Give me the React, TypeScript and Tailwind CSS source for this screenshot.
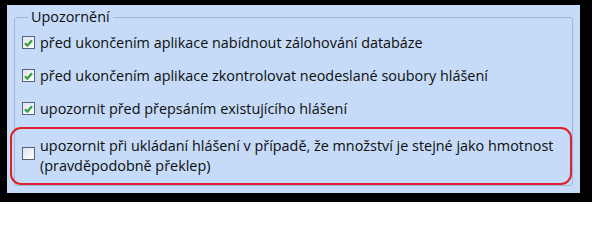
import React from "react";

type Row = { text: string; checked: boolean };

const rows: Row[] = [
  { text: "před ukončením aplikace nabídnout zálohování databáze", checked: true },
  { text: "před ukončením aplikace zkontrolovat neodeslané soubory hlášení", checked: true },
  { text: "upozornit před přepsáním existujícího hlášení", checked: true },
];

function Check({ checked }: { checked: boolean }) {
  return (
    <span className="flex h-[13px] w-[13px] shrink-0 items-center justify-center border border-[#55637f] bg-gradient-to-br from-[#dfe3ea] to-white">
      {checked && (
        <svg width="9" height="8" viewBox="0 0 9 8">
          <path d="M1 4.2 L3.4 6.6 L8 1.2" fill="none" stroke="#2fa33a" strokeWidth="2.2" />
        </svg>
      )}
    </span>
  );
}

export default function App() {
  return (
    <div className="h-[202px] w-[592px] overflow-hidden bg-black pb-[9px] pl-[7px] pr-[12px] pt-[5px] font-['Open_Sans',sans-serif] text-[14.4px] text-[#0e0e0e]">
      <div className="h-full w-full bg-[#c5dbf7] px-[7px] pt-[3px] shadow-[0_0_4px_2px_rgba(0,0,0,0.6)]">
        <fieldset className="h-[178px] rounded-[3px] border border-[#9fb8d8] pl-[7px] pr-0">
          <legend className="ml-[6px] px-[3px] leading-[18px]">Upozornění</legend>
          <div className="flex flex-col">
            {rows.map((r, i) => (
              <div key={i} className="flex h-[33px] items-center gap-[5px]">
                <Check checked={r.checked} />
                <span className="leading-[18px]">{r.text}</span>
              </div>
            ))}
          </div>
          <div className="-ml-[12px] mt-[2px] flex h-[58px] items-center gap-[5px] rounded-[11px] border-2 border-[#e0202a] pl-[10px]">
            <span className="-mt-[5px]">
              <Check checked={false} />
            </span>
            <span className="leading-[20px]">
              upozornit při ukládaní hlášení v případě, že množství je stejné jako hmotnost
              <br />
              (pravděpodobně překlep)
            </span>
          </div>
        </fieldset>
      </div>
    </div>
  );
}
